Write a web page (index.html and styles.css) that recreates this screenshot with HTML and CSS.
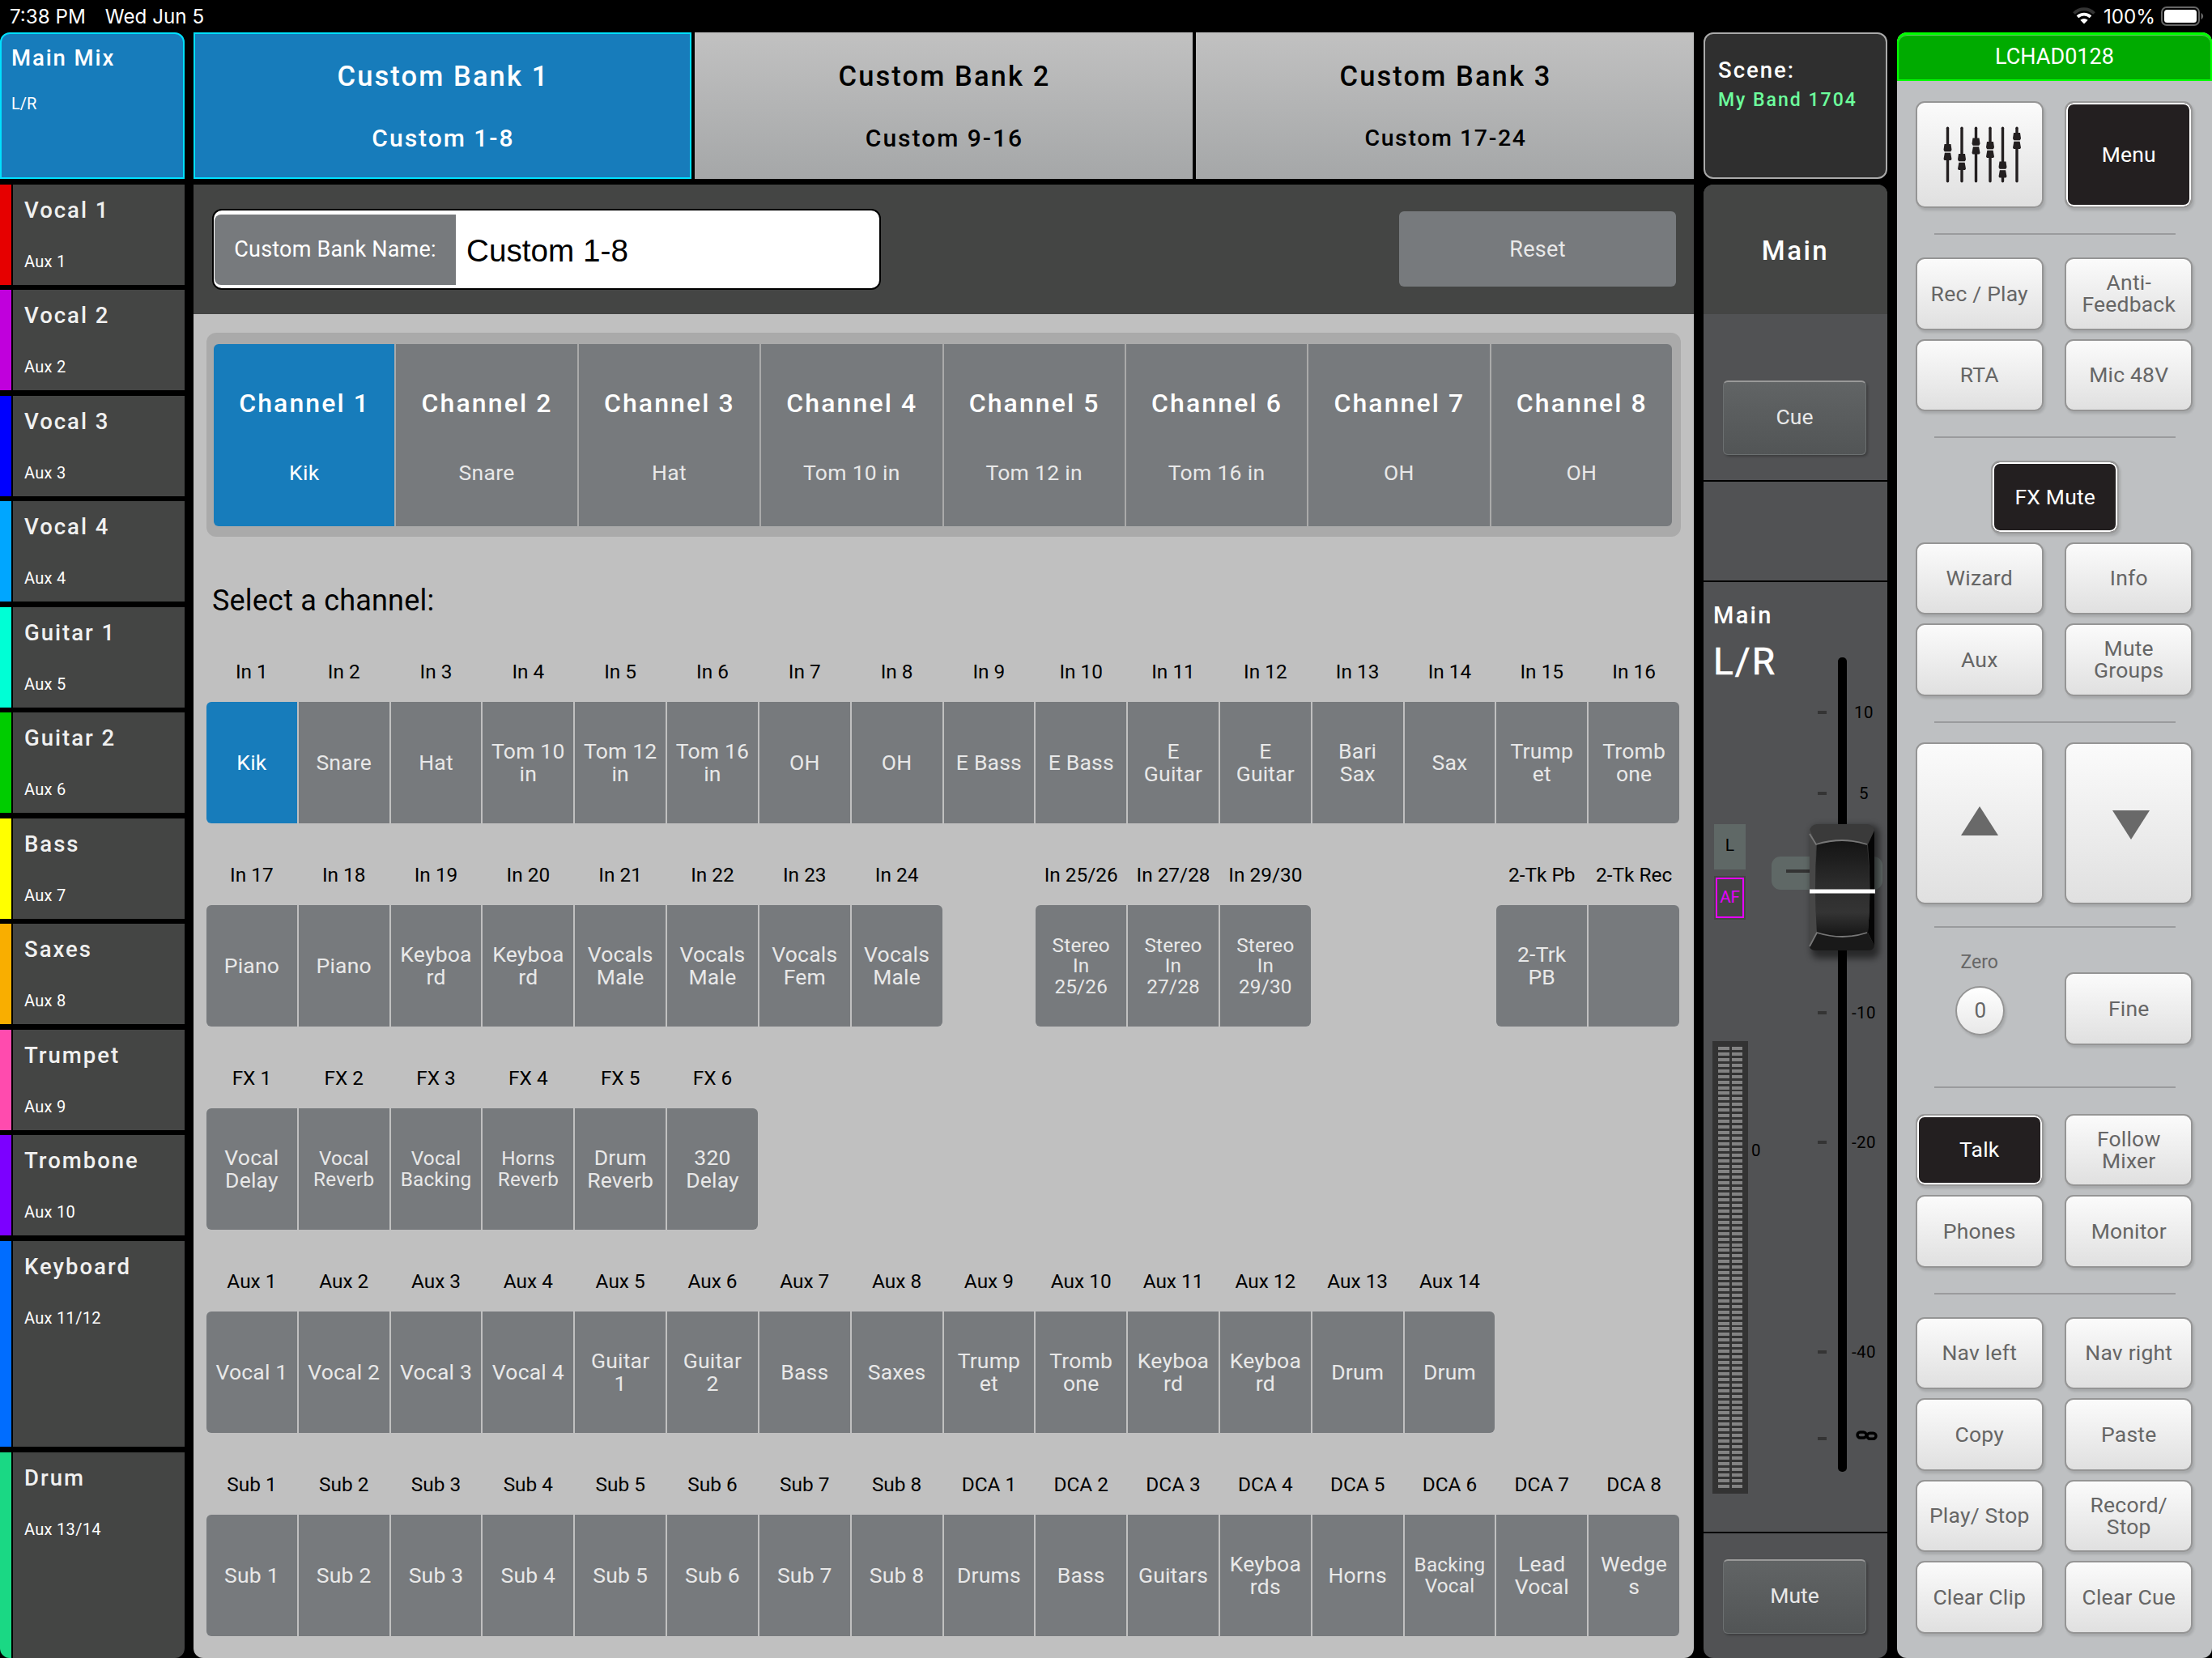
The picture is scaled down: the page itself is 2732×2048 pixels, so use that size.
FILE: index.html
```html
<!DOCTYPE html>
<html lang="en">
<head>
    <meta charset="UTF-8">
    <title>Mixer - Custom Banks</title>
    <link rel="stylesheet" href="styles.css">
</head>
<body>
    <div id="statusBar">
        <div class="statusLeft"><span>7:38 PM</span><span>Wed Jun 5</span></div>
        <div class="statusRight">
            <svg class="wifiIcon" width="28" height="22" viewBox="0 0 28 22">
                <path d="M1.500 7.500A17.500 17.500 0 0 1 26.500 7.500" fill="none" stroke="#333" stroke-width="3.8"/>
                <path d="M6 11.800A11.500 11.500 0 0 1 22 11.800" fill="none" stroke="#fff" stroke-width="3.8"/>
                <path d="M14 20.500L9.300 15.800A7 7 0 0 1 18.700 15.800Z" fill="#fff"/>
            </svg>
            <span>100%</span>
            <svg width="54" height="24" viewBox="0 0 54 24">
                <rect x="1" y="1" width="46" height="22" rx="6" fill="none" stroke="#666" stroke-width="2"/>
                <rect x="4" y="4" width="40" height="16" rx="3.5" fill="#fff"/>
                <path d="M49.500 8c3.500 1.500 3.500 6.500 0 8z" fill="#666"/>
            </svg>
        </div>
    </div>

    <div id="app">
        <div id="sidebar">
            <div class="mainMix"><b>Main Mix</b><span>L/R</span></div>
            <div id="auxList"></div>
        </div>

        <div id="center">
            <div class="tabs">
                <div class="tab tabActive"><b>Custom Bank 1</b><span>Custom 1-8</span></div>
                <div class="tab"><b>Custom Bank 2</b><span>Custom 9-16</span></div>
                <div class="tab tabLong"><b>Custom Bank 3</b><span>Custom 17-24</span></div>
            </div>
            <div class="nameBar">
                <div class="nameBox">
                    <div class="nameLabel">Custom Bank Name:</div>
                    <div class="nameValue">Custom 1-8</div>
                </div>
                <div class="resetButton">Reset</div>
            </div>
            <div class="bankBody">
                <div id="bankChannels"></div>
                <div class="selectTitle">Select a channel:</div>
                <div id="channelRows"></div>
            </div>
        </div>

        <div id="mainStrip">
            <div class="scene"><b>Scene:</b><span>My Band 1704</span></div>
            <div class="strip">
                <div class="stripTitle">Main</div>
                <div class="cueArea"><div class="darkButton">Cue</div></div>
                <div class="emptyArea"></div>
                <div class="faderArea">
                    <div class="faderName">Main</div>
                    <div class="faderBus">L/R</div>
                    <div class="track"></div>
                    <div class="tick" style="top: 159px"></div><div class="tickLabel" style="top: 161px">10</div>
                    <div class="tick" style="top: 259px"></div><div class="tickLabel" style="top: 261px">5</div>
                    <div class="tick" style="top: 530px"></div><div class="tickLabel" style="top: 532px">-10</div>
                    <div class="tick" style="top: 690px"></div><div class="tickLabel" style="top: 692px">-20</div>
                    <div class="tick" style="top: 949px"></div><div class="tickLabel" style="top: 951px">-40</div>
                    <div class="tick" style="top: 1056px"></div>
                    <svg class="infinity" width="28" height="13" viewBox="0 0 28 13">
                        <rect x="2" y="2" width="11" height="7" rx="3.5" fill="none" stroke="#000" stroke-width="3.4"/>
                        <rect x="14" y="3.2" width="11" height="7" rx="3.5" fill="none" stroke="#000" stroke-width="3.4"/>
                    </svg>
                    <div class="limiter">L</div>
                    <div class="antiFeedback">AF</div>
                    <div class="zeroSlot"></div>
                    <svg class="knob" width="110" height="190" viewBox="0 0 110 190">
                        <defs>
                            <linearGradient id="knobFace" x1="0" y1="0" x2="0" y2="1">
                                <stop offset="0" stop-color="#141414"/>
                                <stop offset="0.45" stop-color="#2c2c2c"/>
                                <stop offset="0.75" stop-color="#343434"/>
                                <stop offset="1" stop-color="#151515"/>
                            </linearGradient>
                            <filter id="knobShadow" x="-30%" y="-20%" width="160%" height="140%">
                                <feGaussianBlur stdDeviation="4"/>
                            </filter>
                        </defs>
                        <rect x="17" y="14" width="84" height="164" rx="9" fill="#000" opacity="0.5" filter="url(#knobShadow)"/>
                        <rect x="15" y="12" width="80" height="156" rx="9" fill="#3a3a3a"/>
                        <path d="M15 18L23 37Q21 90 24 145L15 164Z" fill="#474747"/>
                        <path d="M95 20L87 37Q92 92 87 146L95 162Z" fill="#050505"/>
                        <path d="M15 164L24 145Q56 155 86 145L95 162Q94 168 87 168H23Q17 168 15 164Z" fill="#191919"/>
                        <path d="M24 37Q56 29 86 37Q92 92 87 146Q56 155 24 146Q20 92 24 37Z" fill="url(#knobFace)"/>
                        <path d="M15 24L23 37Q56 27 86 37M15 163L24 146Q56 156 86 146" fill="none" stroke="#777" stroke-width="1.8"/>
                        <rect x="15" y="92.5" width="81" height="5" fill="#fff"/>
                    </svg>
                    <div class="meter"><i></i><i></i></div>
                    <div class="meterZero">0</div>
                </div>
                <div class="muteArea"><div class="darkButton">Mute</div></div>
            </div>
        </div>

        <div id="controls">
            <div class="deviceName">LCHAD0128</div>
            <div class="buttonGroup">
                <div class="button tall">
                    <svg class="mixerIcon" width="102" height="72" viewBox="0 0 102 72" fill="#231f20">
                        <g id="faders"></g>
                    </svg>
                </div>
                <div class="button tall on">Menu</div>
            </div>
            <hr>
            <div class="buttonGroup">
                <div class="button">Rec / Play</div><div class="button">Anti-<br>Feedback</div>
                <div class="button">RTA</div><div class="button">Mic 48V</div>
            </div>
            <hr>
            <div class="buttonGroup">
                <div class="button on wide">FX Mute</div>
                <div class="button">Wizard</div><div class="button">Info</div>
                <div class="button">Aux</div><div class="button">Mute<br>Groups</div>
            </div>
            <hr class="beforeArrows">
            <div class="buttonGroup arrows">
                <div class="button arrow"><svg width="46" height="36"><path d="M23 0L46 36H0Z" fill="#696969"/></svg></div>
                <div class="button arrow"><svg class="down" width="46" height="36"><path d="M0 0H46L23 36Z" fill="#696969"/></svg></div>
            </div>
            <hr class="afterArrows">
            <div class="buttonGroup fineGroup">
                <div class="zero"><span>Zero</span><div class="round">0</div></div>
                <div class="button">Fine</div>
            </div>
            <hr class="afterFine">
            <div class="buttonGroup">
                <div class="button on">Talk</div><div class="button">Follow<br>Mixer</div>
                <div class="button">Phones</div><div class="button">Monitor</div>
            </div>
            <hr>
            <div class="buttonGroup">
                <div class="button">Nav left</div><div class="button">Nav right</div>
                <div class="button">Copy</div><div class="button">Paste</div>
                <div class="button">Play/ Stop</div><div class="button">Record/<br>Stop</div>
                <div class="button">Clear Clip</div><div class="button">Clear Cue</div>
            </div>
        </div>
    </div>
<script src="mixer.js"></script>
</body>
</html>
```

FILE: styles.css
```css
body {
    margin: 0;
    width: 2732px;
    height: 2048px;
    overflow: hidden;
    background-color: #000;
    color: #fff;
    font-family: Roboto, "Liberation Sans", sans-serif;
    font-size: 26.5px;
}

b {
    font-weight: 500;
}

#statusBar {
    height: 40px;
    display: flex;
    justify-content: space-between;
    align-items: center;
    padding: 0 9px 0 12px;
    font-family: Inter, sans-serif;
    font-size: 24.2px;
}

.statusLeft,
.statusRight {
    display: flex;
    align-items: center;
}

.statusLeft {
    gap: 24px;
}

.statusRight {
    gap: 10px;
}

.statusRight span {
    margin-right: -3px;
}

#app {
    display: flex;
    height: 2008px;
}

/* left column */
#sidebar {
    width: 228px;
    margin-right: 11px;
    display: flex;
    flex-direction: column;
}

.mainMix {
    box-sizing: border-box;
    height: 181px;
    margin-bottom: 7px;
    padding: 14px 12px;
    border: 2px solid #00e1ff;
    border-radius: 12px 12px 0 0;
    background-color: #177cbb;
    display: flex;
    flex-direction: column;
}

.mainMix b {
    font-size: 27.5px;
    line-height: 32px;
    letter-spacing: 1.9px;
}

.mainMix span {
    font-size: 20px;
    line-height: 24px;
    margin-top: 28px;
}

#auxList {
    flex: 1;
    display: grid;
    grid-template-rows: repeat(14, 1fr);
    gap: 6.5px;
}

.aux {
    border-left: 14px solid #000;
    display: flex;
    min-height: 0;
}

.aux div {
    flex: 1;
    margin-left: 2px;
    padding: 16px 14px;
    background-color: #444544;
    display: flex;
    flex-direction: column;
}

.aux b {
    font-size: 27.5px;
    line-height: 32px;
    letter-spacing: 2px;
    color: #f0f0f0;
}

.aux span {
    font-size: 20px;
    line-height: 24px;
    margin-top: 35px;
    letter-spacing: 0.3px;
}

.double {
    grid-row: span 2;
}

.aux:last-child {
    border-bottom-left-radius: 12px;
    overflow: hidden;
}

.aux:last-child div {
    border-bottom-right-radius: 12px;
}

/* bank editor */
#center {
    width: 1853px;
    margin-right: 12px;
    display: flex;
    flex-direction: column;
}

.tabs {
    height: 181px;
    margin-bottom: 7px;
    display: flex;
    gap: 4px;
}

.tab {
    width: 615px;
    box-sizing: border-box;
    padding-top: 34px;
    background: linear-gradient(#c1c1c1, #a5a7a8);
    color: #000;
    display: flex;
    flex-direction: column;
    align-items: center;
}

.tabActive {
    padding-top: 32px;
    border: 2px solid #00e1ff;
    background: #177cbb;
    color: #fff;
}

.tab b {
    font-size: 34.5px;
    line-height: 40px;
    letter-spacing: 2.1px;
    margin-right: -2px;
}

.tab span {
    font-size: 30px;
    font-weight: 500;
    line-height: 34px;
    margin: 40px -2px 0 0;
    letter-spacing: 2px;
}

.tabLong span {
    font-size: 28.5px;
    letter-spacing: 1.6px;
}

.nameBar {
    box-sizing: border-box;
    height: 160px;
    padding: 29px 22px 30px 23px;
    background-color: #444544;
    display: flex;
    justify-content: space-between;
    align-items: center;
}

.nameBox {
    box-sizing: border-box;
    width: 826px;
    height: 100px;
    padding: 5px 0 4px 1px;
    border: 2px solid #000;
    border-radius: 12px;
    background-color: #fff;
    display: flex;
    align-items: center;
}

.nameLabel {
    box-sizing: border-box;
    width: 298px;
    height: 87px;
    line-height: 87px;
    border-radius: 8px 0 0 8px;
    background-color: #777a7d;
    text-align: center;
    font-size: 27px;
    letter-spacing: 0.2px;
}

.nameValue {
    padding: 3px 0 0 13px;
    color: #000;
    font-family: "Liberation Sans", sans-serif;
    font-size: 38.7px;
}

.resetButton {
    width: 342px;
    height: 93px;
    line-height: 94px;
    border-radius: 6px;
    background-color: #777a7d;
    color: #e8e8e8;
    text-align: center;
    font-size: 27px;
    letter-spacing: 0.3px;
}

.bankBody {
    flex: 1;
    box-sizing: border-box;
    padding: 23px 16px 0;
    border-radius: 0 0 12px 12px;
    background-color: #c0c0c0;
}

#bankChannels {
    box-sizing: border-box;
    height: 252px;
    padding: 13.5px 11px 13px 9px;
    border-radius: 12px;
    background-color: #aaa;
    display: flex;
    gap: 2px;
}

.bankChannel {
    flex: 1;
    padding-top: 54px;
    background-color: #777a7d;
    color: #e8e8e8;
    display: flex;
    flex-direction: column;
    align-items: center;
}

.bankChannel b {
    color: #fff;
    font-size: 32px;
    line-height: 38px;
    letter-spacing: 2.1px;
    margin-right: -1px;
}

.bankChannel span {
    line-height: 32px;
    margin-top: 51px;
    letter-spacing: 0.3px;
}

.bankChannel:first-child {
    border-radius: 6px 0 0 6px;
}

.bankChannel:last-child {
    border-radius: 0 6px 6px 0;
}

.bankChannel.selected,
.cell.selected {
    background-color: #177cbb;
    color: #fff;
}

.selectTitle {
    height: 44px;
    line-height: 44px;
    margin: 57px 0 0 7px;
    color: #000;
    font-size: 36px;
    letter-spacing: 0.2px;
}

#channelRows {
    margin-top: 47.5px;
    width: 1821px;
    display: flex;
    flex-direction: column;
    gap: 45px;
}

.channelRow {
    display: grid;
    grid-template-columns: repeat(16, 1fr);
    height: 206px;
}

.channel {
    display: flex;
    flex-direction: column;
}

.channel label {
    height: 36px;
    margin: 0 2px 19px 0;
    line-height: 36px;
    color: #000;
    text-align: center;
    font-size: 24.4px;
    white-space: nowrap;
}

.cell {
    height: 150.5px;
    margin-right: 2px;
    background-color: #777a7d;
    color: #e8e8e8;
    display: flex;
    align-items: center;
    justify-content: center;
    text-align: center;
    line-height: 27.5px;
    letter-spacing: 0.2px;
    white-space: pre;
}

.cell.small {
    font-size: 24.3px;
    line-height: 25.5px;
}

.first .cell {
    border-radius: 6px 0 0 6px;
}

.last .cell {
    border-radius: 0 6px 6px 0;
}

/* main fader strip */
#mainStrip {
    width: 227px;
    margin-right: 12px;
    display: flex;
    flex-direction: column;
}

.scene {
    box-sizing: border-box;
    height: 181px;
    margin-bottom: 7px;
    padding: 29px 16px;
    border: 2px solid #aaa;
    border-radius: 12px;
    background-color: #2f2f2f;
    display: flex;
    flex-direction: column;
}

.scene b {
    font-size: 27.5px;
    line-height: 32px;
    letter-spacing: 2px;
}

.scene span {
    margin-top: 7px;
    color: #6dff9d;
    font-size: 23px;
    font-weight: 500;
    line-height: 28px;
    letter-spacing: 2px;
    white-space: nowrap;
}

.strip {
    flex: 1;
    border-radius: 12px;
    background-color: #515254;
    overflow: hidden;
    display: flex;
    flex-direction: column;
}

.stripTitle {
    height: 160px;
    line-height: 163px;
    background-color: #444544;
    text-align: center;
    font-size: 33px;
    font-weight: 500;
    letter-spacing: 2.5px;
}

.cueArea {
    box-sizing: border-box;
    height: 207px;
    padding-top: 82px;
    border-bottom: 2px solid #000;
}

.darkButton {
    box-sizing: border-box;
    width: 177px;
    height: 92px;
    line-height: 86px;
    margin: 0 0 0 24px;
    border: 1px solid #6c7071;
    border-top: 2px solid #999;
    border-radius: 6px;
    background: linear-gradient(#616465, #525556);
    box-shadow: 2px 2px 3px rgba(0, 0, 0, 0.25);
    color: #e8e8e8;
    text-align: center;
}

.emptyArea {
    box-sizing: border-box;
    height: 124px;
    border-bottom: 2px solid #000;
}

.faderArea {
    position: relative;
    height: 1175px;
    border-bottom: 2px solid #000;
    padding: 23px 12px;
    box-sizing: border-box;
}

.faderName {
    font-size: 29px;
    font-weight: 500;
    line-height: 36px;
    letter-spacing: 2.3px;
}

.faderBus {
    margin-top: 12px;
    font-size: 46px;
    line-height: 54px;
    letter-spacing: 2px;
    -webkit-text-stroke: 0.6px #fff;
}

.track {
    position: absolute;
    left: 166px;
    top: 93px;
    width: 11px;
    height: 1006px;
    border-radius: 5px;
    background-color: #000;
}

.tick {
    position: absolute;
    left: 141px;
    width: 11px;
    height: 4px;
    background-color: #343434;
}

.tickLabel {
    position: absolute;
    left: 173px;
    width: 50px;
    line-height: 24px;
    margin-top: -12px;
    color: #000;
    font-size: 20.5px;
    letter-spacing: 0.5px;
    text-align: center;
}

.infinity {
    position: absolute;
    left: 188px;
    top: 1048px;
}

.limiter {
    position: absolute;
    left: 13px;
    top: 299px;
    width: 39px;
    height: 56px;
    line-height: 52px;
    background-color: #5f6866;
    color: #000;
    font-size: 21px;
    text-align: center;
}

.antiFeedback {
    position: absolute;
    left: 13px;
    top: 363px;
    box-sizing: border-box;
    width: 39px;
    height: 54px;
    line-height: 48px;
    border: 2px solid #444544;
    background-color: #444544;
    box-shadow: inset 0 0 0 2px #e600ff;
    color: #e600ff;
    font-size: 20.5px;
    text-align: center;
}

.zeroSlot {
    position: absolute;
    left: 84px;
    top: 339px;
    width: 137px;
    height: 41px;
    border-radius: 11px;
    background-color: #5f6866;
}

.zeroSlot::before {
    content: "";
    position: absolute;
    left: 18px;
    top: 16px;
    width: 40px;
    height: 4px;
    background-color: #343434;
}

.knob {
    position: absolute;
    left: 116px;
    top: 287px;
}

.meter {
    position: absolute;
    left: 11px;
    top: 567px;
    box-sizing: border-box;
    width: 44px;
    height: 559px;
    padding: 7px;
    background-color: #333;
    display: flex;
    gap: 3px;
}

.meter i {
    flex: 1;
    background: repeating-linear-gradient(#868686 0, #808080 4px, #333 4px, #333 6.93px);
}

.meterZero {
    position: absolute;
    left: 59px;
    top: 690px;
    color: #000;
    font-size: 20.5px;
    line-height: 24px;
}

.muteArea {
    padding-top: 32px;
}

/* right hand controls */
#controls {
    width: 389px;
    border-radius: 12px;
    background-color: #bec0c2;
    color: #666;
}

.deviceName {
    box-sizing: border-box;
    height: 60px;
    line-height: 54px;
    margin-bottom: 25px;
    border: 2px solid #00ff00;
    border-top-width: 3px;
    border-radius: 12px 12px 0 0;
    background-color: #00ab00;
    box-shadow: inset 0 1px 1px rgba(255, 255, 255, 0.4);
    color: #fff;
    text-align: center;
    font-size: 27px;
}

.buttonGroup {
    display: grid;
    grid-template-columns: 158px 158px;
    column-gap: 26.5px;
    row-gap: 11px;
    justify-content: center;
    margin-left: -1px;
}

.button {
    box-sizing: border-box;
    height: 89.5px;
    padding-bottom: 1px;
    border: 2px solid #959595;
    border-radius: 11px;
    background: linear-gradient(#fbfbfb, #e0e0e0);
    box-shadow: 2px 3px 3px rgba(0, 0, 0, 0.12), inset 0 1px 1px #fff;
    display: flex;
    align-items: center;
    justify-content: center;
    text-align: center;
    font-size: 26.5px;
    line-height: 27px;
    letter-spacing: 0.2px;
}

.button.on {
    border-color: #999;
    box-shadow: 2px 3px 3px rgba(0, 0, 0, 0.12), inset 0 0 0 2px #fff;
    background: #231f20;
    color: #fff;
}

.tall {
    height: 132px;
}

.wide {
    grid-column: span 2;
    width: 158px;
    margin-left: 93.5px;
}

.mixerIcon {
    margin-left: 6px;
}

.arrow {
    height: 200px;
}

.arrow svg {
    margin-top: -6px;
}

.arrow .down {
    margin: 4px 0 0 5px;
}

hr {
    width: 298px;
    height: 2px;
    margin: 31px auto 28px;
    border: none;
    background-color: #9a9b9d;
}

.beforeArrows {
    margin-bottom: 24.5px;
}

.afterArrows {
    margin: 27px auto 55px;
}

.afterFine {
    margin: 51px auto 32px;
}

.zero {
    display: flex;
    flex-direction: column;
    align-items: center;
}

.zero span {
    margin-top: -26px;
    font-size: 23px;
    line-height: 28px;
}

.round {
    box-sizing: border-box;
    width: 61px;
    height: 61px;
    line-height: 57px;
    margin: 15px -2px -11px 0;
    border: 2px solid #959595;
    border-radius: 50%;
    background: linear-gradient(#fff, #e8e8e8);
    box-shadow: 2px 3px 3px rgba(0, 0, 0, 0.12);
    text-align: center;
    font-size: 26px;
}
```

FILE: mixer.js
```js
// name, aux, colour, takes two rows
var auxes = [
    ["Vocal 1", "Aux 1", "#e60000"],
    ["Vocal 2", "Aux 2", "#c000dc"],
    ["Vocal 3", "Aux 3", "#0000ff"],
    ["Vocal 4", "Aux 4", "#00a6ff"],
    ["Guitar 1", "Aux 5", "#00ffd5"],
    ["Guitar 2", "Aux 6", "#00cc00"],
    ["Bass", "Aux 7", "#ffff00"],
    ["Saxes", "Aux 8", "#f9ae00"],
    ["Trumpet", "Aux 9", "#ff4bae"],
    ["Trombone", "Aux 10", "#7c00ff"],
    ["Keyboard", "Aux 11/12", "#006dff", true],
    ["Drum", "Aux 13/14", "#1ad884", true]
];

var bank = ["Kik", "Snare", "Hat", "Tom 10 in", "Tom 12 in", "Tom 16 in", "OH", "OH"];

// null leaves a hole in the row, a leading * means the smaller text size
var rows = [
    [["In 1", "Kik"], ["In 2", "Snare"], ["In 3", "Hat"], ["In 4", "Tom 10\nin"], ["In 5", "Tom 12\nin"], ["In 6", "Tom 16\nin"], ["In 7", "OH"], ["In 8", "OH"],
     ["In 9", "E Bass"], ["In 10", "E Bass"], ["In 11", "E\nGuitar"], ["In 12", "E\nGuitar"], ["In 13", "Bari\nSax"], ["In 14", "Sax"], ["In 15", "Trump\net"], ["In 16", "Tromb\none"]],
    [["In 17", "Piano"], ["In 18", "Piano"], ["In 19", "Keyboa\nrd"], ["In 20", "Keyboa\nrd"], ["In 21", "Vocals\nMale"], ["In 22", "Vocals\nMale"], ["In 23", "Vocals\nFem"], ["In 24", "Vocals\nMale"],
     null, ["In 25/26", "*Stereo\nIn\n25/26"], ["In 27/28", "*Stereo\nIn\n27/28"], ["In 29/30", "*Stereo\nIn\n29/30"], null, null, ["2-Tk Pb", "2-Trk\nPB"], ["2-Tk Rec", ""]],
    [["FX 1", "Vocal\nDelay"], ["FX 2", "*Vocal\nReverb"], ["FX 3", "*Vocal\nBacking"], ["FX 4", "*Horns\nReverb"], ["FX 5", "Drum\nReverb"], ["FX 6", "320\nDelay"]],
    [["Aux 1", "Vocal 1"], ["Aux 2", "Vocal 2"], ["Aux 3", "Vocal 3"], ["Aux 4", "Vocal 4"], ["Aux 5", "Guitar\n1"], ["Aux 6", "Guitar\n2"], ["Aux 7", "Bass"], ["Aux 8", "Saxes"],
     ["Aux 9", "Trump\net"], ["Aux 10", "Tromb\none"], ["Aux 11", "Keyboa\nrd"], ["Aux 12", "Keyboa\nrd"], ["Aux 13", "Drum"], ["Aux 14", "Drum"]],
    [["Sub 1", "Sub 1"], ["Sub 2", "Sub 2"], ["Sub 3", "Sub 3"], ["Sub 4", "Sub 4"], ["Sub 5", "Sub 5"], ["Sub 6", "Sub 6"], ["Sub 7", "Sub 7"], ["Sub 8", "Sub 8"],
     ["DCA 1", "Drums"], ["DCA 2", "Bass"], ["DCA 3", "Guitars"], ["DCA 4", "Keyboa\nrds"], ["DCA 5", "Horns"], ["DCA 6", "*Backing\nVocal"], ["DCA 7", "Lead\nVocal"], ["DCA 8", "Wedge\ns"]]
];

var html = "";
for (var i = 0; i < auxes.length; i++) {
    html += '<div class="aux' + (auxes[i][3] ? " double" : "") + '" style="border-left-color: ' + auxes[i][2] + '"><div><b>' + auxes[i][0] + "</b><span>" + auxes[i][1] + "</span></div></div>";
}
document.getElementById("auxList").innerHTML = html;

html = "";
for (var i = 0; i < bank.length; i++) {
    html += '<div class="bankChannel' + (i == 0 ? " selected" : "") + '"><b>Channel ' + (i + 1) + "</b><span>" + bank[i] + "</span></div>";
}
document.getElementById("bankChannels").innerHTML = html;

html = "";
for (var r = 0; r < rows.length; r++) {
    html += '<div class="channelRow">';
    for (var c = 0; c < rows[r].length; c++) {
        var ch = rows[r][c];
        if (!ch) {
            html += "<div></div>";
            continue;
        }
        var cls = "channel";
        if (!rows[r][c - 1]) cls += " first";
        if (!rows[r][c + 1]) cls += " last";
        var cellCls = "cell";
        if (r == 0 && c == 0) cellCls += " selected";
        if (ch[1].charAt(0) == "*") cellCls += " small";
        html += '<div class="' + cls + '"><label>' + ch[0] + '</label><div class="' + cellCls + '">' + ch[1].replace("*", "") + "</div></div>";
    }
    html += "</div>";
}
document.getElementById("channelRows").innerHTML = html;

// little faders on the mixer button: x of the line and y of the knob centre
var knobs = [[8.5, 33], [26, 45], [43.500, 25.500], [61, 30], [76.500, 54.500], [94, 19]];
html = "";
for (var i = 0; i < knobs.length; i++) {
    var x = knobs[i][0];
    var y = knobs[i][1];
    html += '<rect x="' + (x - 1.7) + '" y="1.5" width="3.4" height="69" rx="1.7"/>';
    html += '<path d="M' + (x - 4) + " " + (y - 10) + "h8l1 7l-1.500 3l1.500 8.500l-1 1.500h-8l-1-1.500l1.500-8.500l-1.500-3z" + '"/>';
    html += '<rect x="' + (x - 4.5) + '" y="' + (y - 0.7) + '" width="9" height="1.4" fill="#eee"/>';
}
document.getElementById("faders").innerHTML = html;
```
